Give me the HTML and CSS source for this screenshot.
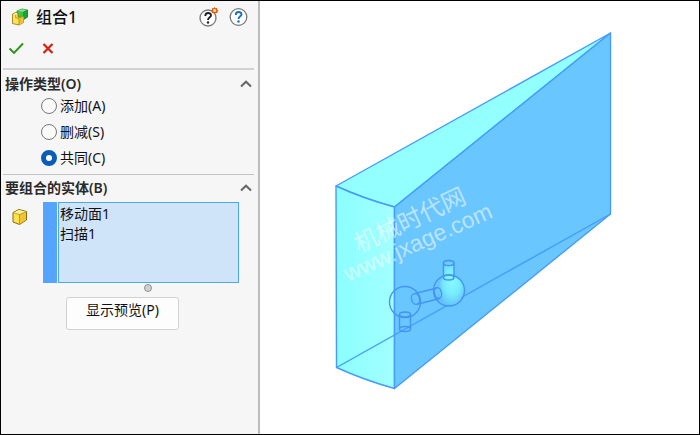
FILE: index.html
```html
<!DOCTYPE html>
<html lang="zh-CN">
<head>
<meta charset="utf-8">
<title>组合1</title>
<link rel="stylesheet" href="styles.css">
</head>
<body>
<div class="app">
  <form class="panel">
    <header class="panel-head">
      <div class="title-row">
        <svg class="icon-combine" viewBox="0 0 18 18" aria-hidden="true">
          <path d="M6 3 11 1l5.500 1v7L12.500 11.500 6 10z" fill="#3cc846" stroke="#1f7d2a" stroke-width=".8"/>
          <path d="M6 3l5-2 5.500 1-4 2z" fill="#7be07a"/>
          <path d="M12.500 4v7.500l4-2.500V2z" fill="#22a033" stroke="#1f7d2a" stroke-width=".5"/>
          <path d="M1.500 6l3-1.500L7 5v4l3 .5L12.500 8.500V14.500L8 17l-6.500-1.500z" fill="#ffe253" stroke="#94700f" stroke-width=".8"/>
          <path d="M8 17v-6.500l4.500-2V14.500z" fill="#f0c232"/>
          <path d="M2 6.200l2.500-1.200 2 .4-1.800 1.300z" fill="#fff6b8"/>
          <path d="M4.700 6.700V9.800L8 10.500V17" fill="none" stroke="#94700f" stroke-width=".6"/>
        </svg>
        <h1>组合1</h1>
        <button class="help" type="button" aria-label="新增功能">
          <svg viewBox="0 0 20 20" aria-hidden="true">
            <circle cx="9" cy="11" r="8" fill="#fff" stroke="#77797c" stroke-width="1.300"/>
            <path d="M6.300 9c0-4 5.700-3.700 5.700-.6C12 10.300 9 10.300 9 13" fill="none" stroke="#222" stroke-width="1.900"/>
            <circle cx="9" cy="15.500" r="1.200" fill="#222"/>
            <path d="M15.500 0l1 1.200 1.600-.2.100 1.500 1.300 1-1.100 1 .1 1.600-1.700-.1-1.200 1.200-1-1.300-1.700.1.200-1.600L12 3.500l1.200-1-.1-1.500 1.500.2z" fill="#df571f"/>
            <circle cx="15.600" cy="3.500" r="1.600" fill="#ffe35b"/>
          </svg>
        </button>
        <button class="help" type="button" aria-label="帮助">
          <svg viewBox="0 0 20 20" aria-hidden="true">
            <circle cx="9.500" cy="10" r="8.300" fill="#fff" stroke="#77797c" stroke-width="1.300"/>
            <path d="M6.800 8c0-4 5.700-3.700 5.700-.6 0 1.900-3 1.900-3 4.600" fill="none" stroke="#1b6fb5" stroke-width="1.900"/>
            <circle cx="9.500" cy="14.500" r="1.200" fill="#1b6fb5"/>
          </svg>
        </button>
      </div>
      <div class="action-row">
        <button type="button" aria-label="确定">
          <svg viewBox="0 0 16 16" aria-hidden="true"><path d="M1.500 8.500 6 13 15 3.500" fill="none" stroke="#2b9412" stroke-width="1.900"/></svg>
        </button>
        <button type="button" aria-label="取消">
          <svg viewBox="0 0 16 16" aria-hidden="true"><path d="M3.500 4l9 9m0-9-9 9" fill="none" stroke="#d81e10" stroke-width="2.200"/></svg>
        </button>
      </div>
    </header>

    <section class="group group-type">
      <div class="group-head">
        <h2>操作类型(O)</h2>
        <button type="button" aria-label="折叠操作类型">
          <svg viewBox="0 0 12 8" aria-hidden="true"><path d="M1 6.500 6 1.700l5 4.800" fill="none" stroke="#666" stroke-width="2"/></svg>
        </button>
      </div>
      <div class="choices">
        <label><input type="radio" name="type">添加(A)</label>
        <label><input type="radio" name="type">删减(S)</label>
        <label><input type="radio" name="type" checked>共同(C)</label>
      </div>
    </section>

    <section class="group group-bodies">
      <div class="group-head">
        <h2 id="bodies-title">要组合的实体(B)</h2>
        <button type="button" aria-label="折叠要组合的实体">
          <svg viewBox="0 0 12 8" aria-hidden="true"><path d="M1 6.500 6 1.700l5 4.800" fill="none" stroke="#666" stroke-width="2"/></svg>
        </button>
      </div>
      <div class="bodies">
        <svg class="icon-body" viewBox="0 0 18 18" aria-hidden="true">
          <path d="M2 4.500 8 1.500l7.500 2V12l-7 4.500L2 14z" fill="#ffe14d" stroke="#8a6a12"/>
          <path d="M2.500 4.700 8 2l7 1.800-6.500 2.700z" fill="#fff3a0"/>
          <path d="M8.500 6.500 15 3.900v8L8.500 16z" fill="#f0c52f"/>
          <path d="M2 4.600l6.500 1.900L15.500 3.500M8.500 6.500v9.800" fill="none" stroke="#a9831c" stroke-width=".7"/>
        </svg>
        <div class="selection">
          <select multiple size="4" aria-labelledby="bodies-title">
            <option>移动面1</option>
            <option>扫描1</option>
          </select>
        </div>
      </div>
      <div class="grip"></div>
      <button class="preview" type="button">显示预览(P)</button>
    </section>
  </form>

  <main class="viewport">
    <svg class="model" viewBox="260 1 439 433" role="img" aria-label="三维模型">
      <defs>
        <linearGradient id="side" x1="0" x2="1">
          <stop offset="0" stop-color="#8bffff"/>
          <stop offset="1" stop-color="#a3ffff"/>
        </linearGradient>
        <radialGradient id="ball" cx=".55" cy=".45" r=".6">
          <stop offset="0" stop-color="#86fbff"/>
          <stop offset=".5" stop-color="#78ecff"/>
          <stop offset="1" stop-color="#63c0fd"/>
        </radialGradient>
      </defs>
      <g stroke="#469bfb" stroke-width="1.400" stroke-linejoin="round">
        <path d="M336 186 610.500 33 394.500 207Q363 198.500 336 186z" fill="#93ffff"/>
        <path d="M336 186Q363 198.500 394.500 207V388.500Q364 380 336.500 367.500z" fill="url(#side)"/>
        <path d="M394.500 207 610.500 33V214L394.500 388.500z" fill="#6ac6ff"/>
        <path d="M336.500 367.500 610.500 214" fill="none"/>
      </g>
      <path d="M443 277v-12q5-5 11 0v11c7 3 11 8 10 15-1 9-10 15-18 14-8-2-10-8-7-12 5-4-1-8 2-12z" fill="url(#ball)"/>
      <g fill="none" stroke="#4595f0" stroke-width="1.400">
        <circle cx="405" cy="302" r="15.500"/>
        <circle cx="449" cy="290.500" r="15.500"/>
        <ellipse cx="415.500" cy="299" rx="4" ry="5.500" transform="rotate(-15 415.500 299)"/>
        <ellipse cx="438" cy="293" rx="3.500" ry="5.500" transform="rotate(-15 438 293)"/>
        <path d="M415 293.500 437 288M417 304.300 440 298.500"/>
        <ellipse cx="448.700" cy="263" rx="5.300" ry="2.500"/>
        <ellipse cx="448.700" cy="277.500" rx="5.300" ry="2.500"/>
        <path d="M443.400 263v14.500M454 263v14.500"/>
        <ellipse cx="405" cy="314.500" rx="5.500" ry="2.500"/>
        <ellipse cx="405" cy="329" rx="5.500" ry="2.500"/>
        <path d="M399.500 314.500V329M410.500 314.500V329"/>
      </g>
      <g class="watermark">
        <text class="mark-name" transform="translate(359 253) rotate(-25)">机械时代网</text>
        <text class="mark-site" transform="translate(348 282) rotate(-24)">www.jxage.com</text>
      </g>
    </svg>
  </main>
</div>
</body>
</html>
```
FILE: styles.css
```css
* {
  box-sizing: border-box;
}

body {
  margin: 0;
  background: #fff;
  color: #111;
  font: 14px/20px "Noto Sans", "Noto Sans CJK SC", sans-serif;
}

.app {
  display: grid;
  grid-template-columns: 259px 1fr;
  min-height: 100vh;
  border: 1px solid #000;
}

.panel {
  padding: 0 4px 0 2px;
  background: #f6f6f6;
  border-right: 2px solid #bdbdbd;
}

button {
  display: flex;
  align-items: center;
  justify-content: center;
  padding: 0;
  border: 0;
  background: none;
  color: inherit;
  font: inherit;
}

h1,
h2 {
  margin: 0;
  color: #2b2b2b;
}

h1 {
  flex: 1;
  color: #111;
  font-size: 16px;
  font-weight: 500;
  line-height: 24px;
}

h2 {
  font-size: 14px;
  font-weight: 600;
  line-height: 20px;
}

.panel-head {
  height: 69px;
  padding: 4px 5px 0;
  border-bottom: 2px solid #d2d2d2;
}

.title-row {
  display: flex;
  align-items: center;
  height: 24px;
  padding-left: 3px;
}

.icon-combine {
  width: 18px;
  height: 18px;
  margin-right: 7px;
}

.help {
  margin-left: 10px;
}

.help svg {
  width: 20px;
  height: 20px;
}

.action-row {
  display: flex;
  gap: 16px;
  padding-top: 11px;
}

.action-row svg {
  display: block;
  width: 16px;
  height: 16px;
}

.group {
  padding: 4px 2px 0;
}

.group-type {
  height: 105px;
  border-bottom: 1px solid #c4c4c4;
}

.group-bodies {
  padding-top: 3px;
}

.group-head {
  display: flex;
  align-items: center;
  justify-content: space-between;
  height: 20px;
}

.group-head svg {
  display: block;
  width: 12px;
  height: 8px;
}

.choices {
  display: grid;
  gap: 2px;
  padding: 0 0 0 36px;
}

.choices label {
  display: flex;
  align-items: center;
  gap: 3px;
  height: 24px;
}

.choices input {
  appearance: none;
  width: 16px;
  height: 16px;
  margin: 0;
  border: 1px solid #777;
  border-radius: 50%;
  background: #fafafa;
}

.choices input:checked {
  border: 5px solid #0b5cb8;
  background: #fff;
}

.bodies {
  display: flex;
  align-items: flex-start;
  padding: 4px 13px 0 6px;
}

.icon-body {
  width: 18px;
  height: 18px;
  margin: 6px 14px 0 0;
}

.selection {
  display: flex;
  flex: 1;
  min-width: 0;
  border-left: 14px solid #55a5ff;
}

select {
  flex: 1;
  min-width: 0;
  height: 81px;
  margin-left: 1px;
  padding: 0;
  overflow: hidden;
  appearance: none;
  border: 1px solid #4da8e8;
  border-radius: 0;
  outline: 0;
  background: #cfe4f8;
  color: inherit;
  font: inherit;
}

option {
  height: 20px;
  min-height: 20px;
  padding: 0 1px;
  line-height: 20px;
}

.grip {
  width: 8px;
  height: 8px;
  margin: 1px auto 0 139px;
  border: 1px solid #929292;
  border-radius: 50%;
  background: #d0d0d0;
}

.preview {
  width: 113px;
  height: 33px;
  margin: 5px 0 0 61px;
  padding-bottom: 8px;
  border: 1px solid #d2d2d2;
  border-radius: 3px;
  background: #fdfdfd;
}

.viewport {
  display: grid;
  min-width: 0;
}

.model {
  width: 100%;
  height: 100%;
}

.watermark {
  fill: #fff;
  fill-opacity: 0.55;
}

.mark-name {
  font: 24px "Noto Sans CJK SC", sans-serif;
}

.mark-site {
  font: 23px "Liberation Sans", sans-serif;
}
```
